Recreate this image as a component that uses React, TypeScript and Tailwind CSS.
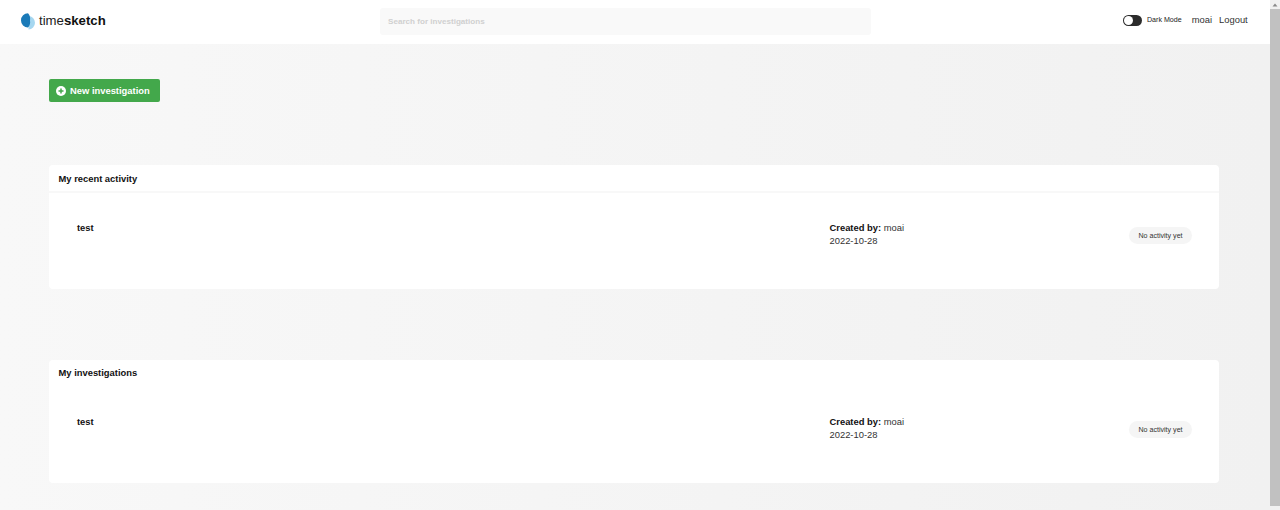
import React from "react";

function Card({ title, first }: { title: string; first: boolean }) {
  return (
    <section className={`bg-white rounded-[4px] flex flex-col ${first ? "h-[124px]" : "h-[123px]"}`}>
      <div className={`pl-[9.5px] flex items-center text-[9.4px] font-bold text-[#111] ${first ? "h-[28px] pt-[2px] border-b-2 border-[#f8f8f8]" : "h-[26px]"}`}>
        {title}
      </div>
      <div className={`flex-1 flex pl-[28px] pr-[27px] ${first ? "pt-[28px]" : "pt-[29px]"}`}>
        <div className="w-[752.5px] text-[9.4px] font-bold text-[#111] leading-[13px]">test</div>
        <div className="flex-1 text-[9.4px] leading-[13px] text-[#333]">
          <div><span className="font-bold text-[#111]">Created by:</span> moai</div>
          <div>2022-10-28</div>
        </div>
        <div className="mt-[6px] h-[17px] w-[63px] pt-[2px] rounded-full bg-[#f5f5f5] flex items-center justify-center text-[7.1px] text-[#333]">
          No activity yet
        </div>
      </div>
    </section>
  );
}

export default function App() {
  return (
    <div className="w-[1280px] h-[510px] overflow-hidden flex font-['Liberation_Sans',Arial,sans-serif]">
      <div className="w-[1270px] h-full flex flex-col bg-gradient-to-r from-[#f8f8f8] to-[#f1f1f1]">
        <header className="h-[44px] bg-white flex items-center shrink-0">
          <div className="w-[380px] pl-[21px] -mt-[2px] flex items-center">
            <svg width="14" height="17" viewBox="0 0 14 17" className="mr-[4px]">
              <path d="M7.5 3 A6.5 6.8 0 0 1 14 9.8 A6.5 6.8 0 0 1 7.5 16.6 Z" fill="#a6d7f0" />
              <path d="M7 0.2 A7 7.2 0 0 0 7 14.6 A8.5 8.5 0 0 0 9 7.4 A8.5 8.5 0 0 0 7 0.2 Z" fill="#1a7ab8" />
            </svg>
            <span className="text-[13.2px] text-[#222] leading-none">time<span className="font-bold text-[#111]">sketch</span></span>
          </div>
          <div className="w-[491px] h-[27px] -mt-[1px] bg-[#f9f9f9] rounded-[3px] pl-[8px] pt-[1px] flex items-center text-[8.1px] font-bold text-[#d0d0d0]">
            Search for investigations
          </div>
          <div className="flex-1 flex items-center pl-[252px] -mt-[3px]">
            <div className="w-[19px] h-[11px] rounded-full bg-[#2c2c2c] relative mr-[5px]">
              <div className="absolute left-[1px] top-[1px] w-[9px] h-[9px] rounded-full bg-white" />
            </div>
            <span className="text-[7.1px] text-[#222] mr-[10px]">Dark Mode</span>
            <span className="text-[9.4px] text-[#333] mr-[7px]">moai</span>
            <span className="text-[9.4px] text-[#333]">Logout</span>
          </div>
        </header>
        <main className="flex-1 pl-[49px] pr-[51px] pt-[35px]">
          <button className="w-[111px] h-[23px] rounded-[2px] bg-[#43a84b] text-white text-[9.4px] font-bold flex items-center pl-[7px] pt-[1px]">
            <svg width="10" height="10" viewBox="0 0 10 10" className="mr-[4px]">
              <circle cx="5" cy="5" r="5" fill="#fff" />
              <path d="M5 2.5v5M2.5 5h5" stroke="#43a84b" strokeWidth="1.5" />
            </svg>
            New investigation
          </button>
          <div className="mt-[63px] flex flex-col gap-[71px]">
            <Card title="My recent activity" first />
            <Card title="My investigations" first={false} />
          </div>
        </main>
      </div>
      <div className="w-[10px] h-full bg-[#f1f1f1] flex flex-col items-center">
        <div className="h-[9px] flex items-center justify-center">
          <svg width="6" height="4" viewBox="0 0 6 4"><path d="M3 0.5 L5.5 3.5 H0.5 Z" fill="#8a8a8a" /></svg>
        </div>
        <div className="w-full h-[497px] bg-[#c1c1c1]" />
      </div>
    </div>
  );
}
